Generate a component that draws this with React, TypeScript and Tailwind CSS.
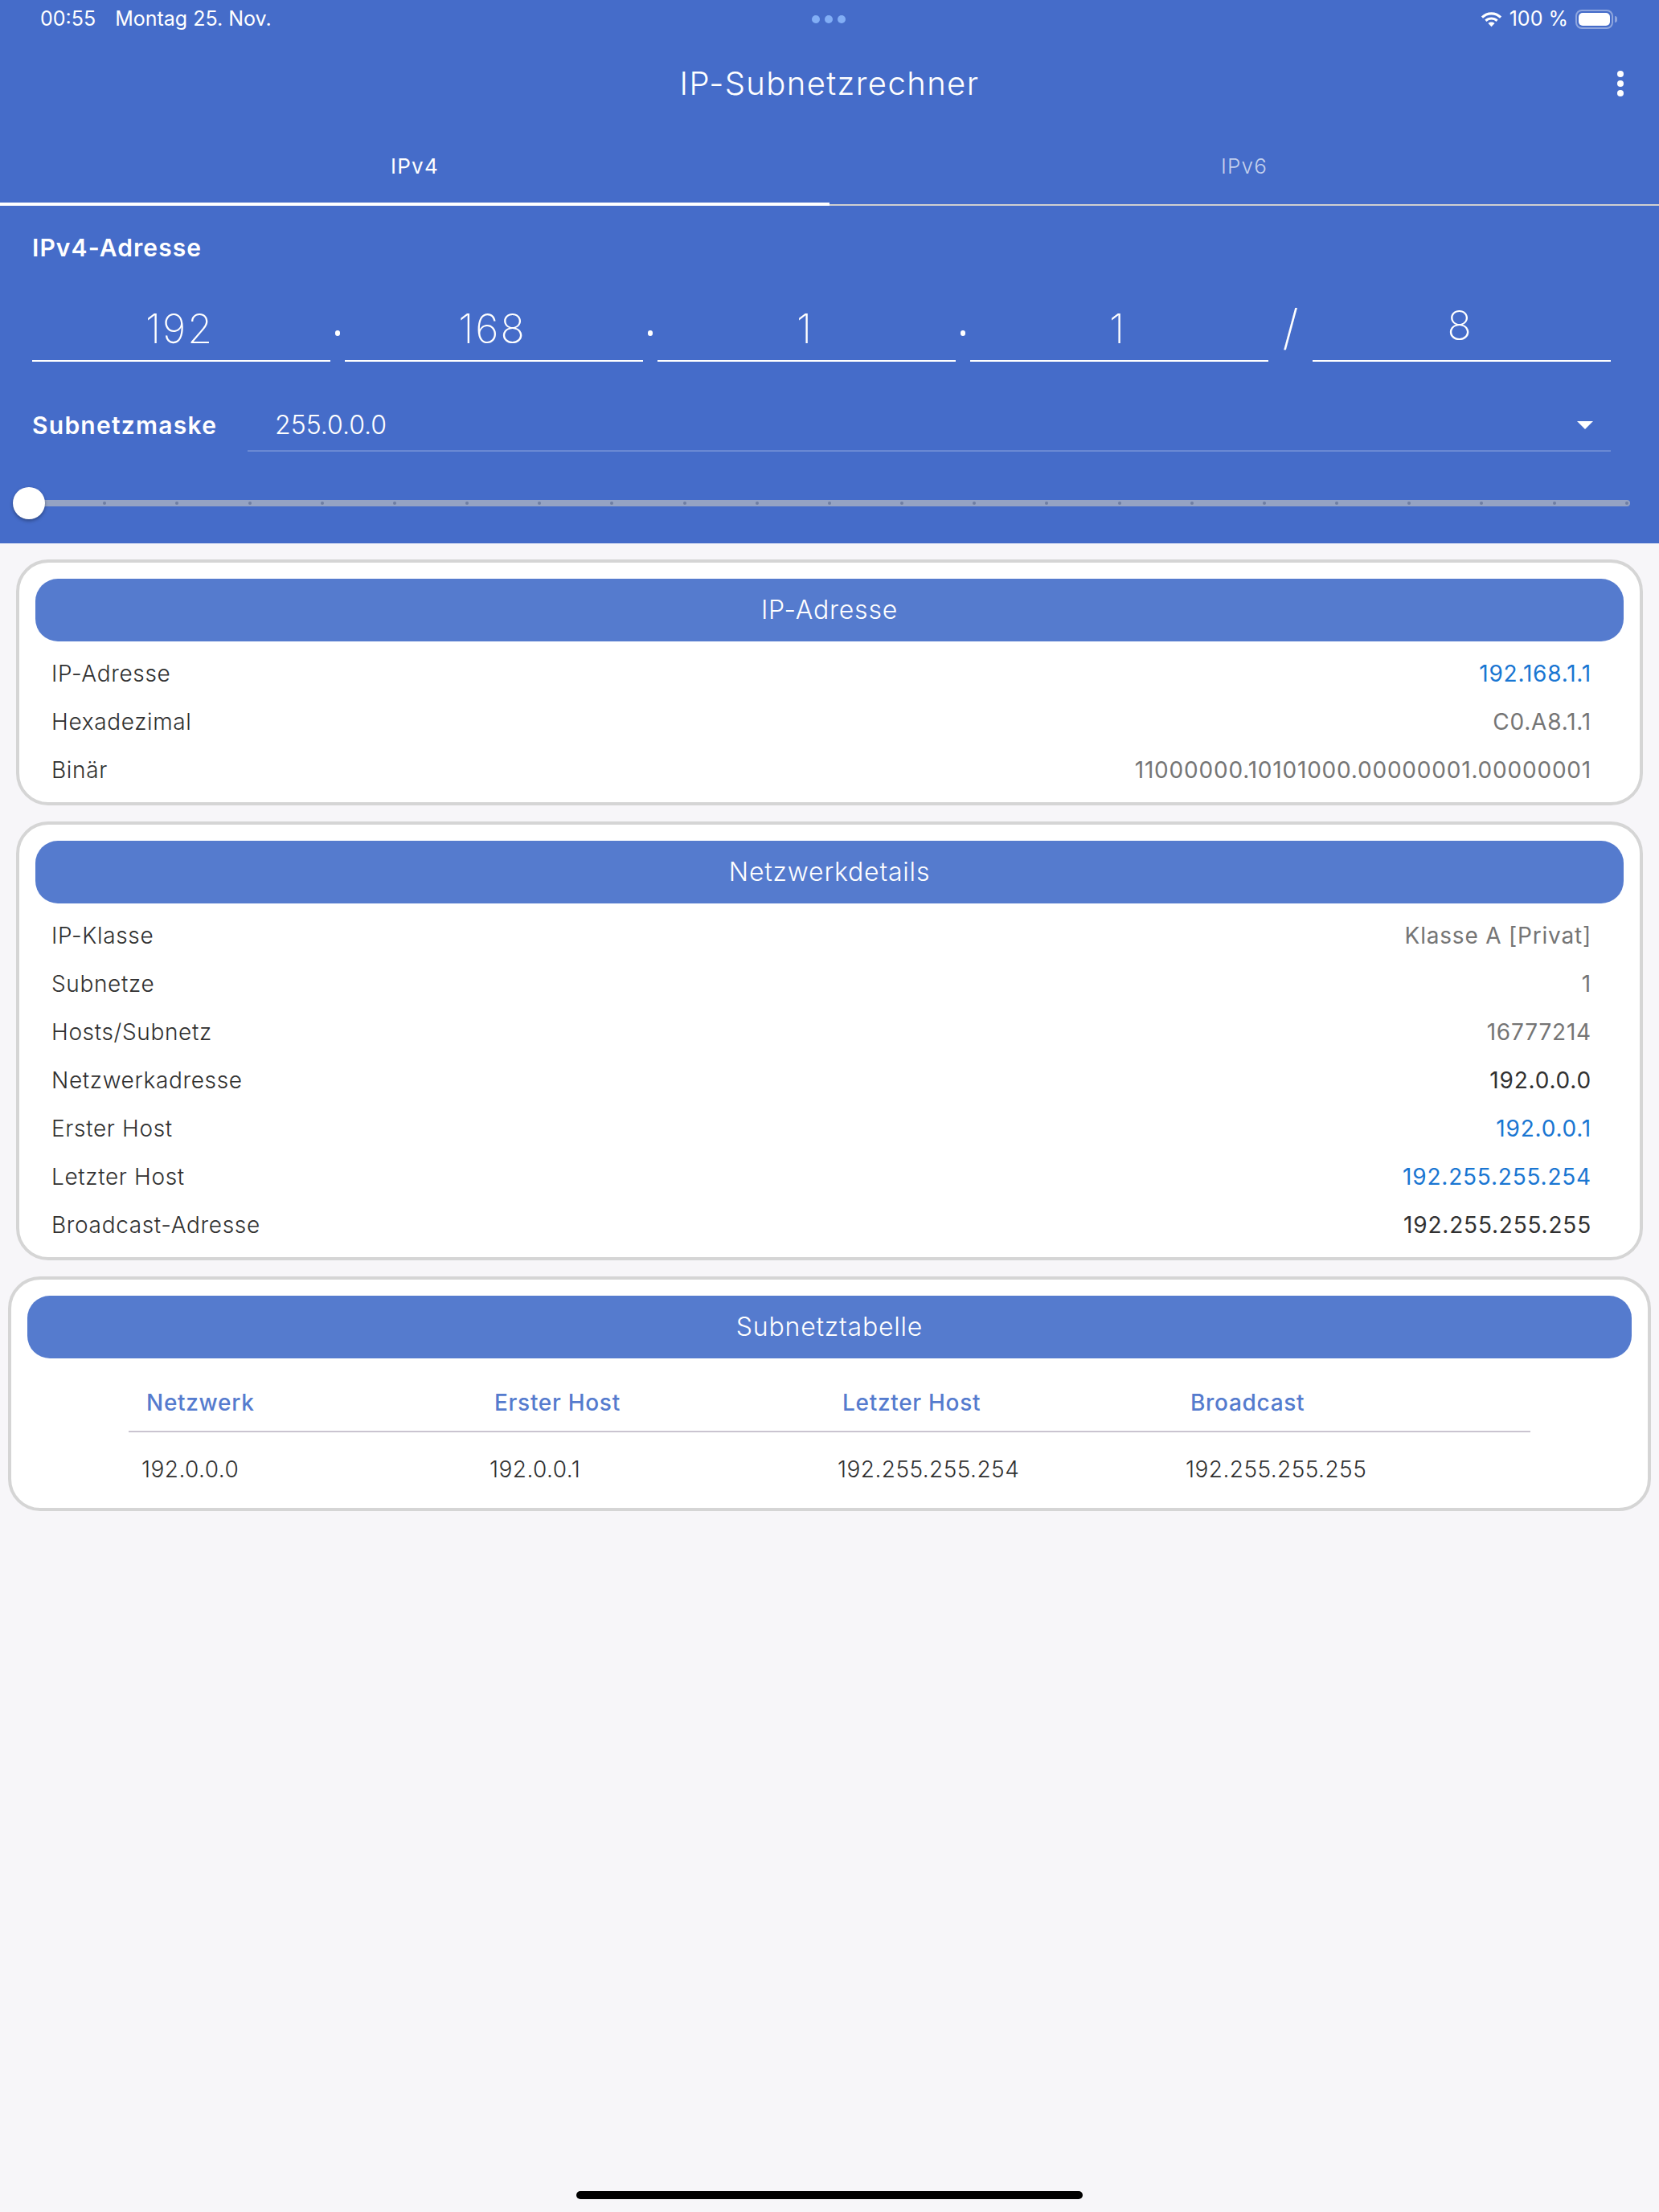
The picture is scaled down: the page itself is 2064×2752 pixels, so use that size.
const ipRows = [
  { label: "IP-Adresse", value: "192.168.1.1", color: "text-[#1976d2]" },
  { label: "Hexadezimal", value: "C0.A8.1.1", color: "text-[#757575]" },
  { label: "Binär", value: "11000000.10101000.00000001.00000001", color: "text-[#757575]" },
];

const networkRows = [
  { label: "IP-Klasse", value: "Klasse A [Privat]", color: "text-[#757575]" },
  { label: "Subnetze", value: "1", color: "text-[#757575]" },
  { label: "Hosts/Subnetz", value: "16777214", color: "text-[#757575]" },
  { label: "Netzwerkadresse", value: "192.0.0.0", color: "text-[#303030]" },
  { label: "Erster Host", value: "192.0.0.1", color: "text-[#1976d2]" },
  { label: "Letzter Host", value: "192.255.255.254", color: "text-[#1976d2]" },
  { label: "Broadcast-Adresse", value: "192.255.255.255", color: "text-[#303030]" },
];

const tableHead = ["Netzwerk", "Erster Host", "Letzter Host", "Broadcast"];
const tableRow = ["192.0.0.0", "192.0.0.1", "192.255.255.254", "192.255.255.255"];
const ticks = Array.from({ length: 23 }, (_, i) => i);

function WifiIcon() {
  return (
    <svg width="27" height="20" viewBox="0 0 28 20" fill="none" stroke="white" strokeWidth="3.2">
      <path d="M2 7.5C8.8 1 19.2 1 26 7.5" />
      <path d="M6.6 11.8C10.8 8 17.2 8 21.4 11.8" />
      <path d="M14 19.5L9.8 15.2C12.2 13.2 15.8 13.2 18.2 15.2Z" fill="white" stroke="none" />
    </svg>
  );
}

function BatteryIcon() {
  return (
    <div className="flex items-center">
      <div className="w-[47px] h-[24px] rounded-[8px] border-2 border-white/40 p-[2px]">
        <div className="w-full h-full rounded-[5px] bg-white" />
      </div>
      <div className="ml-[2px] w-[3px] h-[8px] rounded-r-full bg-white/40" />
    </div>
  );
}

function IpInput({ value, raised }: { value: string; raised?: boolean }) {
  return (
    <div className={`w-[371px] flex justify-center border-b-2 border-white pr-[4px] ${raised ? "pb-[15px]" : "pb-[11px]"}`}>
      <span className="text-[50px] leading-[56px] tracking-[2px] font-extralight text-white">{value}</span>
    </div>
  );
}

function Separator() {
  return (
    <div className="w-[18px] flex justify-center pb-[32px] self-end">
      <span className="w-[6px] h-[7px] rounded-full bg-white" />
    </div>
  );
}

function Card({ title, wide, children }: { title: string; wide?: boolean; children: React.ReactNode }) {
  return (
    <section className={`bg-white border-4 border-[#d5d5d5] rounded-[40px] px-5 pt-5 mt-5 ${wide ? "mx-[10px]" : "mx-5 pb-[10px]"}`}>
      <div className="h-[78px] flex items-center justify-center rounded-[28px] bg-[#557bce] text-[32px] tracking-[0.8px] text-white font-light">
        {title}
      </div>
      {children}
    </section>
  );
}

function DetailRows({ rows }: { rows: { label: string; value: string; color: string }[] }) {
  return (
    <div className="pt-[10px]">
      {rows.map((row) => (
        <div key={row.label} className="h-[60px] flex items-center justify-between pl-5 pr-10 text-[28px]">
          <span className="text-[#303030] font-light tracking-[0.65px]">{row.label}</span>
          <span className={`${row.color} font-normal tracking-[0.8px]`}>{row.value}</span>
        </div>
      ))}
    </div>
  );
}

export default function App() {
  return (
    <div className="relative w-full min-h-[2752px] bg-[#f7f6f9] font-['Inter','Roboto',sans-serif]">
      <header className="bg-[#456cc9] text-white h-[676px]">
        <div className="h-12 grid grid-cols-3 items-center pl-[50px] pr-[52px] text-[25px]">
          <div className="flex gap-[24px] font-normal">
            <span>00:55</span>
            <span>Montag 25. Nov.</span>
          </div>
          <div className="flex justify-center gap-[6px]">
            <span className="w-[10px] h-[10px] rounded-full bg-[#82aef5]" />
            <span className="w-[10px] h-[10px] rounded-full bg-[#82aef5]" />
            <span className="w-[10px] h-[10px] rounded-full bg-[#82aef5]" />
          </div>
          <div className="flex justify-end items-center gap-[9px] font-normal">
            <WifiIcon />
            <span>100 %</span>
            <BatteryIcon />
          </div>
        </div>

        <div className="relative h-[112px] flex items-center justify-center">
          <h1 className="text-[40px] font-light tracking-[1.4px]">IP-Subnetzrechner</h1>
          <div className="absolute right-[44px] top-[40px] flex flex-col gap-[4px]">
            <span className="w-2 h-2 rounded-full bg-white" />
            <span className="w-2 h-2 rounded-full bg-white" />
            <span className="w-2 h-2 rounded-full bg-white" />
          </div>
        </div>

        <div className="grid grid-cols-2 h-[96px] text-[26px] tracking-[1.2px]">
          <div className="flex items-center justify-center border-b-4 border-white font-normal">IPv4</div>
          <div className="flex items-center justify-center border-b-4 border-[#456cc9] relative text-white/70 font-light">
            IPv6
            <span className="absolute left-0 right-0 -bottom-[4px] h-[2px] bg-[#d0d0d0]" />
          </div>
        </div>

        <p className="mt-[34px] px-[40px] text-[30px] leading-[36px] font-semibold tracking-[1.1px]">IPv4-Adresse</p>

        <div className="h-[124px] flex items-end pl-[40px]">
          <IpInput value="192" />
          <Separator />
          <IpInput value="168" />
          <Separator />
          <IpInput value="1" />
          <Separator />
          <IpInput value="1" />
          <div className="w-[55px] flex justify-center self-end pb-[8px]">
            <span className="text-[60px] leading-[70px] font-extralight">/</span>
          </div>
          <IpInput value="8" raised />
        </div>

        <div className="mt-[48px] h-[64px] flex pl-[40px] pr-[60px]">
          <span className="w-[268px] pb-[2px] flex items-center text-[30px] font-semibold tracking-[1.25px]">Subnetzmaske</span>
          <div className="flex-1 flex items-center justify-between border-b-2 border-white/20 pl-[34px] pr-[22px]">
            <span className="text-[32px] font-light">255.0.0.0</span>
            <svg width="20" height="10" viewBox="0 0 20 10" fill="white">
              <path d="M0 0H20L10 10Z" />
            </svg>
          </div>
        </div>

        <div className="relative mt-[44px] h-10 px-[36px] flex items-center">
          <div className="w-full h-2 rounded-full bg-[#95a3c3] flex items-center justify-between px-[2px]">
            {ticks.map((tick) => (
              <span key={tick} className="w-1 h-1 rounded-full bg-[#6e7ea3]" />
            ))}
          </div>
          <span className="absolute left-4 top-0 w-10 h-10 rounded-full bg-white shadow-[0_2px_4px_rgba(0,0,0,0.35)]" />
        </div>
      </header>

      <Card title="IP-Adresse">
        <DetailRows rows={ipRows} />
      </Card>

      <Card title="Netzwerkdetails">
        <DetailRows rows={networkRows} />
      </Card>

      <Card title="Subnetztabelle" wide>
        <div className="ml-[126px] w-[1744px] pb-[2px]">
          <div className="grid grid-cols-[433px_433px_433px_433px] h-[92px] border-b-2 border-[#cac4d0] items-center pt-[20px] text-[28px] tracking-[0.7px] font-medium text-[#557bce]">
            {tableHead.map((head) => (
              <span key={head} className="pl-[22px]">{head}</span>
            ))}
          </div>
          <div className="grid grid-cols-[433px_433px_433px_433px] h-[92px] items-center text-[28px] tracking-[0.45px] font-light text-[#303030]">
            {tableRow.map((cell) => (
              <span key={cell} className="pl-[16px]">{cell}</span>
            ))}
          </div>
        </div>
      </Card>

      <div className="absolute left-[717px] top-[2726px] w-[630px] h-[10px] rounded-full bg-black" />
    </div>
  );
}
